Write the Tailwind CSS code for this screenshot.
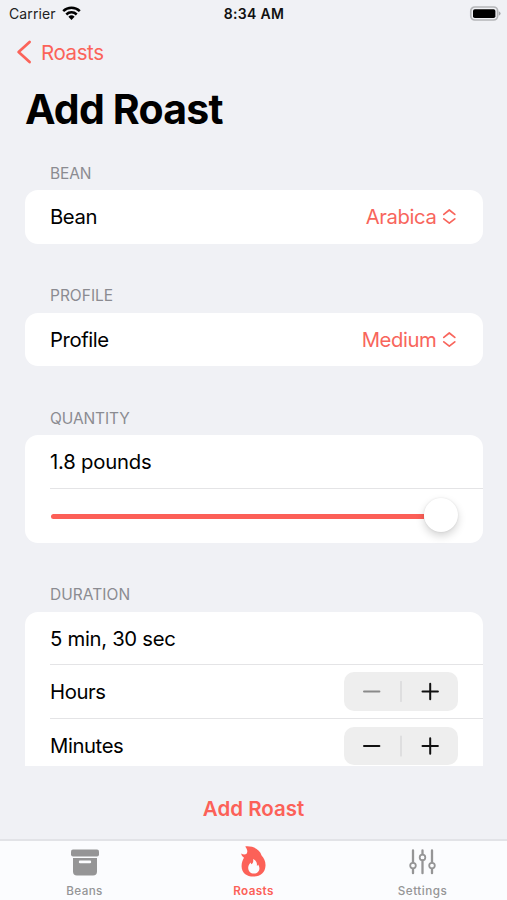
<!DOCTYPE html>
<html lang="en">
<head>
<meta charset="utf-8">
<title>Add Roast</title>
<script src="https://cdn.jsdelivr.net/npm/@tailwindcss/browser@4"></script>
</head>
<body class="bg-[#f0f1f5]">
<div class="flex h-[900px] w-[507px] flex-col overflow-hidden bg-[#f0f1f5] font-['Inter','Liberation_Sans',sans-serif] text-black">
  <header class="h-[121px] shrink-0">
    <div class="grid h-7 grid-cols-3 items-center pr-[6px] pl-[9px] text-[14px] leading-7">
      <div class="flex items-center gap-[6px] text-[#222]">
        <span class="tracking-[0.1px]">Carrier</span>
        <svg class="-mt-[2px] h-[14px] w-[19px]" viewBox="0 0 19 14" fill="none" stroke="#000" stroke-width="2.5">
          <path d="M1.2 5.2A12 12 0 0 1 17.8 5.2"/>
          <path d="M4.3 8.5A7.4 7.4 0 0 1 14.7 8.5"/>
          <path d="M9.5 14L6.4 10.8A4.5 4.5 0 0 1 12.6 10.8Z" fill="#000" stroke="none"/>
        </svg>
      </div>
      <div class="-ml-[2px] text-center font-semibold tracking-[0.35px] whitespace-nowrap text-[#111]">8:34 AM</div>
      <div class="flex justify-end">
        <svg class="-mt-[2px] h-[15px] w-[32px]" viewBox="0 0 32 15">
          <rect x="1.8" y="1" width="26.8" height="13" rx="4" fill="#f0f1f5" stroke="#b4b5b8" stroke-width="1.7"/>
          <rect x="4" y="3.2" width="22.4" height="8.8" rx="1.8" fill="#000"/>
          <path d="M29.8 5.2Q31.6 6 31.6 7.5Q31.6 9 29.8 9.8Z" fill="#a5a6a9"/>
        </svg>
      </div>
    </div>
    <div class="flex h-12 items-center gap-[9px] pl-[16px] text-[20.5px] leading-[48px] text-[#fb6359]">
      <svg class="h-6 w-4" viewBox="0 0 16 24" fill="none" stroke="currentColor" stroke-width="2.7" stroke-linecap="round" stroke-linejoin="round"><path d="M13.6 2L2.6 12L13.6 22"/></svg>
      <span class="pt-[1px] tracking-[-0.4px]">Roasts</span>
    </div>
    <h1 class="pt-[8px] pl-[25px] text-[41px] leading-[50px] font-bold tracking-[-0.8px]">Add Roast</h1>
  </header>

  <main class="h-[645px] shrink-0 overflow-hidden pr-[24.5px] pl-[25px] text-[20.3px] tracking-[-0.4px]">
    <section>
      <h2 class="h-[69px] pt-[43px] pl-[25px] text-[15.5px] leading-5 tracking-[-0.1px] text-[#8b8b91]">BEAN</h2>
      <div class="flex h-[53.5px] items-center justify-between rounded-[13px] bg-white pt-[1px] pr-[25.5px] pl-[25px]">
        <span>Bean</span>
        <span class="flex items-center gap-[5.5px] text-[#f8655c]">Arabica
          <svg class="h-[18px] w-[15px]" viewBox="0 0 15 18" fill="none" stroke="currentColor" stroke-width="1.7" stroke-linecap="round" stroke-linejoin="round"><path d="M1.8 6.4L7.3 2L12.8 6.4M1.8 10.8L7.3 15.2L12.8 10.8"/></svg>
        </span>
      </div>
    </section>
    <section>
      <h2 class="h-[69px] pt-[42.5px] pl-[25px] text-[15.5px] leading-5 tracking-[0px] text-[#8b8b91]">PROFILE</h2>
      <div class="flex h-[53.5px] items-center justify-between rounded-[13px] bg-white pt-[2px] pr-[25.5px] pl-[25px]">
        <span>Profile</span>
        <span class="flex items-center gap-[5.5px] text-[#f8655c]">Medium
          <svg class="h-[18px] w-[15px]" viewBox="0 0 15 18" fill="none" stroke="currentColor" stroke-width="1.7" stroke-linecap="round" stroke-linejoin="round"><path d="M1.8 6.4L7.3 2L12.8 6.4M1.8 10.8L7.3 15.2L12.8 10.8"/></svg>
        </span>
      </div>
    </section>
    <section>
      <h2 class="h-[69px] pt-[43px] pl-[25px] text-[15.5px] leading-5 tracking-[-0.1px] text-[#8b8b91]">QUANTITY</h2>
      <div class="h-[107.5px] rounded-[13px] bg-white pl-[25px]">
        <div class="flex h-[54px] items-center border-b border-[#e4e4e6] pt-[2px] tracking-[-0.2px]">1.8 pounds</div>
        <div class="flex h-[53.5px] items-center pt-[1px] pr-[24.5px] pl-[1px]">
          <div class="h-[5px] flex-1 rounded-l-full bg-[#fc5f57]"></div>
          <div class="-mt-[3px] size-[34px] rounded-full bg-white shadow-[0_4px_8px_rgba(0,0,0,0.17),0_0_2px_rgba(0,0,0,0.1)]"></div>
        </div>
      </div>
    </section>
    <section>
      <h2 class="h-[69px] pt-[42px] pl-[25px] text-[15.5px] leading-5 tracking-[0.05px] text-[#8b8b91]">DURATION</h2>
      <div class="rounded-t-[13px] bg-white pl-[25px]">
        <div class="flex h-[53.5px] items-center border-b border-[#e4e4e6] pt-[2px] tracking-[-0.3px]">5 min, 30 sec</div>
        <div class="flex h-[54px] items-center justify-between border-b border-[#e4e4e6] pr-[24.5px]">
          <span class="pt-[2px]">Hours</span>
          <div class="flex h-[39px] w-[114.5px] items-center rounded-[10px] bg-[#eeeeee]">
            <svg class="h-[39px] w-[114px]" viewBox="0 0 114 39" fill="none" stroke="#111" stroke-width="2" stroke-linecap="round"><path d="M20 19.5H35.4" stroke="#8a8a8a"/><path d="M57 9.5V29.5" stroke="#d4d4d6" stroke-width="1.2"/><path d="M78.5 19.5H93.9M86.2 11.8V27.2"/></svg>
          </div>
        </div>
        <div class="flex h-[54px] items-center justify-between pr-[24.5px]">
          <span class="pt-[1px]">Minutes</span>
          <div class="-mt-[1px] flex h-[38px] w-[114.5px] items-center rounded-[10px] bg-[#eeeeee]">
            <svg class="h-[38px] w-[114px]" viewBox="0 0 114 38" fill="none" stroke="#111" stroke-width="2" stroke-linecap="round"><path d="M20 19H35.4"/><path d="M57 9V29" stroke="#d4d4d6" stroke-width="1.2"/><path d="M78.5 19H93.9M86.2 11.3V26.7"/></svg>
          </div>
        </div>
      </div>
    </section>
  </main>

  <div class="flex h-[73px] shrink-0 items-center justify-center pt-[13px] text-[20.5px] font-semibold text-[#fc6158]">Add Roast</div>

  <nav class="grid h-[61px] shrink-0 grid-cols-3 border-t-2 border-[#e2e3e7] bg-[#fbfcfe] text-[11.7px] leading-[14px] font-medium text-[#959596]">
    <div class="flex flex-col items-center pt-[4px]">
      <svg class="h-[35px] w-[34px]" viewBox="0 0 34 35" fill="currentColor">
        <rect x="3" y="4.6" width="28" height="6.8" rx="2"/>
        <path fill-rule="evenodd" d="M5 13H29V26.5Q29 30.5 25 30.5H9Q5 30.5 5 26.5ZM12 15.6Q10.8 15.6 10.8 16.9Q10.8 18.2 12 18.2H22Q23.2 18.2 23.2 16.9Q23.2 15.6 22 15.6Z"/>
      </svg>
      <span class="pt-[4px] tracking-[0.4px]">Beans</span>
    </div>
    <div class="flex flex-col items-center pt-[4px] font-semibold text-[#fc6158]">
      <svg class="h-[35px] w-[34px]" viewBox="0 0 34 35" fill="currentColor">
        <path fill-rule="evenodd" d="M8.2 1.4C16.5 .6 22.6 4.6 24.6 10.4C27 13 28.7 16.5 28.5 20.8C28.2 27.6 23.6 31.6 16.6 31.6C9.4 31.6 4.8 27.6 4.6 21.4C4.5 18 5.6 15.2 7 12.8C5.5 11.8 4.4 10.4 4.2 8.6C6.3 9.8 8.6 9.8 9.8 8.4C11 6.4 10 3.4 8.2 1.4ZM16 14C16.7 16.4 16 18 14.6 19.2C14 18.8 13.7 18.2 13.7 17.4C12 19 11.1 20.9 11.2 23.1C11.4 26.6 13.6 28.6 16.8 28.6C20.2 28.6 22.5 26.5 22.4 23.1C22.3 21.6 21.9 20.4 21.1 19.4C20.9 20.2 20.4 20.7 19.8 20.8C20.4 18 19.2 15.4 16 14Z"/>
      </svg>
      <span class="pt-[4px] tracking-[0.35px]">Roasts</span>
    </div>
    <div class="flex flex-col items-center pt-[4px]">
      <svg class="h-[35px] w-[34px]" viewBox="0 0 34 35" fill="none" stroke="currentColor" stroke-width="2.3" stroke-linecap="round">
        <path d="M7 5.4V17.4M7 23.8V28.2M16.5 5.4V9.2M16.5 15.6V28.2M26 5.4V17.4M26 23.8V28.2"/>
        <g stroke-width="1.8"><circle cx="7" cy="20.6" r="2.8"/><circle cx="16.5" cy="12.4" r="2.8"/><circle cx="26" cy="20.6" r="2.8"/></g>
      </svg>
      <span class="pt-[4px] tracking-[0.5px]">Settings</span>
    </div>
  </nav>
</div>
</body>
</html>
